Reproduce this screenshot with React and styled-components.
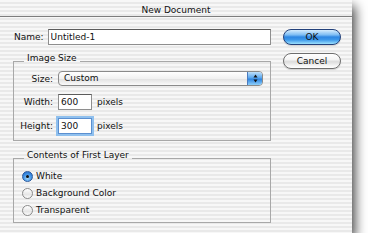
import styled, { createGlobalStyle } from "styled-components";

const GlobalStyle = createGlobalStyle`
  html, body {
    margin: 0;
    padding: 0;
    background: #fff;
  }
  body {
    font-family: "DejaVu Sans", "Lucida Grande", sans-serif;
    font-size: 9px;
    color: #111;
  }
`;

const pinstripe =
  "repeating-linear-gradient(to bottom, #f7f7f7 0, #f7f7f7 2px, #e9e9e9 2px, #e9e9e9 4px)";

const Window = styled.div`
  width: 352px;
  height: 233px;
  background: ${pinstripe};
  box-shadow: 3px 6px 11px rgba(0, 0, 0, 0.75);
  display: flex;
  flex-direction: column;
`;

const TitleBar = styled.div`
  height: 11px;
  padding-top: 5px;
  line-height: 11px;
  text-align: center;
  border-bottom: 1px solid #7d7d7d;
`;

const Body = styled.div`
  display: flex;
  gap: 12px;
  padding: 12px 0 0 13px;
`;

const Main = styled.div`
  width: 258px;
  display: flex;
  flex-direction: column;
`;

const NameRow = styled.div`
  display: flex;
  align-items: center;
  gap: 4px;
  padding-left: 1px;
`;

const TextField = styled.input`
  box-sizing: border-box;
  height: 16px;
  min-width: 0;
  width: ${(p) => (p.$width ? `${p.$width}px` : "auto")};
  flex: ${(p) => (p.$width ? "none" : 1)};
  margin: 0;
  padding: 0 2px;
  font: inherit;
  color: #111;
  background: #fff;
  border: 1px solid #8e8e8e;
  border-top-color: #5c5c5c;
  border-radius: 0;
  outline: none;
  ${(p) =>
    p.$focused &&
    `
    border-color: #5b8fcf;
    box-shadow: 0 0 0 2px #8fc0ee;
  `}
`;

const Group = styled.fieldset`
  margin: ${(p) => p.$top}px 0 0;
  padding: ${(p) => p.$pad};
  border: 1px solid #a8a8a8;
  min-width: 0;
`;

const Legend = styled.legend`
  margin-left: 10px;
  padding: 0 3px 5px;
  line-height: 11px;
`;

const SizeGrid = styled.div`
  display: grid;
  grid-template-columns: 39px auto;
  column-gap: 5px;
  row-gap: 8px;
  align-items: center;
`;

const Label = styled.span`
  justify-self: end;
`;

const Popup = styled.div`
  box-sizing: border-box;
  width: 205px;
  height: 15px;
  display: flex;
  align-items: stretch;
  border: 1px solid #8a8a8a;
  border-radius: 4px;
  background: linear-gradient(to bottom, #ffffff 0%, #f1f1f1 50%, #e2e2e2 55%, #fafafa 100%);
  overflow: hidden;
`;

const PopupText = styled.span`
  flex: 1;
  padding-left: 5px;
  line-height: 13px;
`;

const PopupCap = styled.span`
  width: 14px;
  display: flex;
  align-items: center;
  justify-content: center;
  border-left: 1px solid #4a7bbf;
  background: linear-gradient(to bottom, #bfe0fb 0%, #5aa7ee 45%, #2e84e0 55%, #8fd0fb 100%);
`;

const PixelRow = styled.div`
  display: flex;
  align-items: center;
  gap: 5px;
`;

const RadioList = styled.div`
  display: flex;
  flex-direction: column;
  gap: 5px;
  padding-left: 8px;
`;

const RadioRow = styled.label`
  display: flex;
  align-items: center;
  gap: 3px;
  height: 12px;
`;

const RadioDot = styled.span`
  box-sizing: border-box;
  width: 11px;
  height: 11px;
  border-radius: 50%;
  display: flex;
  align-items: center;
  justify-content: center;
  border: 1px solid ${(p) => (p.$checked ? "#2a5a9e" : "#8a8a8a")};
  background: ${(p) =>
    p.$checked
      ? "radial-gradient(circle at 50% 70%, #9fd6fb 0%, #3d8fe4 55%, #2466c0 100%)"
      : "linear-gradient(to bottom, #ffffff, #e6e6e6 60%, #fbfbfb)"};
  &::after {
    content: "";
    display: ${(p) => (p.$checked ? "block" : "none")};
    width: 3px;
    height: 3px;
    border-radius: 50%;
    background: #111;
  }
`;

const Side = styled.div`
  width: 58px;
  display: flex;
  flex-direction: column;
  gap: 8px;
`;

const PillButton = styled.button`
  box-sizing: border-box;
  width: 58px;
  height: 16px;
  margin: 0;
  padding: 0;
  font: inherit;
  color: #111;
  line-height: 14px;
  border-radius: 8px;
  border: 1px solid ${(p) => (p.$primary ? "#22407a" : "#6e6e6e")};
  background: ${(p) =>
    p.$primary
      ? "linear-gradient(to bottom, #d6ecfd 0%, #7dbdf4 35%, #2d86e2 50%, #3d98ea 70%, #9be0fd 100%)"
      : "linear-gradient(to bottom, #ffffff 0%, #f4f4f4 40%, #dcdcdc 55%, #f2f2f2 80%, #ffffff 100%)"};
  box-shadow: 0 1px 1px rgba(0, 0, 0, 0.15);
`;

const Arrows = () => (
  <svg width="5" height="9" viewBox="0 0 5 9">
    <path d="M2.5 0.5 L4.5 3.5 L0.5 3.5 Z" fill="#111" />
    <path d="M2.5 8.5 L4.5 5.5 L0.5 5.5 Z" fill="#111" />
  </svg>
);

const radios = ["White", "Background Color", "Transparent"];

const App = () => (
  <>
    <GlobalStyle />
    <Window>
      <TitleBar>New Document</TitleBar>
      <Body>
        <Main>
          <NameRow>
            <span>Name:</span>
            <TextField readOnly defaultValue="Untitled-1" />
          </NameRow>
          <Group $top={8} $pad="2px 0 6px">
            <Legend>Image Size</Legend>
            <SizeGrid>
              <Label>Size:</Label>
              <Popup>
                <PopupText>Custom</PopupText>
                <PopupCap>
                  <Arrows />
                </PopupCap>
              </Popup>
              <Label>Width:</Label>
              <PixelRow>
                <TextField $width={34} readOnly defaultValue="600" />
                <span>pixels</span>
              </PixelRow>
              <Label>Height:</Label>
              <PixelRow>
                <TextField $width={34} $focused readOnly defaultValue="300" />
                <span>pixels</span>
              </PixelRow>
            </SizeGrid>
          </Group>
          <Group $top={9} $pad="4px 0 6px">
            <Legend>Contents of First Layer</Legend>
            <RadioList>
              {radios.map((r, i) => (
                <RadioRow key={r}>
                  <RadioDot $checked={i === 0} />
                  <span>{r}</span>
                </RadioRow>
              ))}
            </RadioList>
          </Group>
        </Main>
        <Side>
          <PillButton $primary>OK</PillButton>
          <PillButton>Cancel</PillButton>
        </Side>
      </Body>
    </Window>
  </>
);

export default App;
